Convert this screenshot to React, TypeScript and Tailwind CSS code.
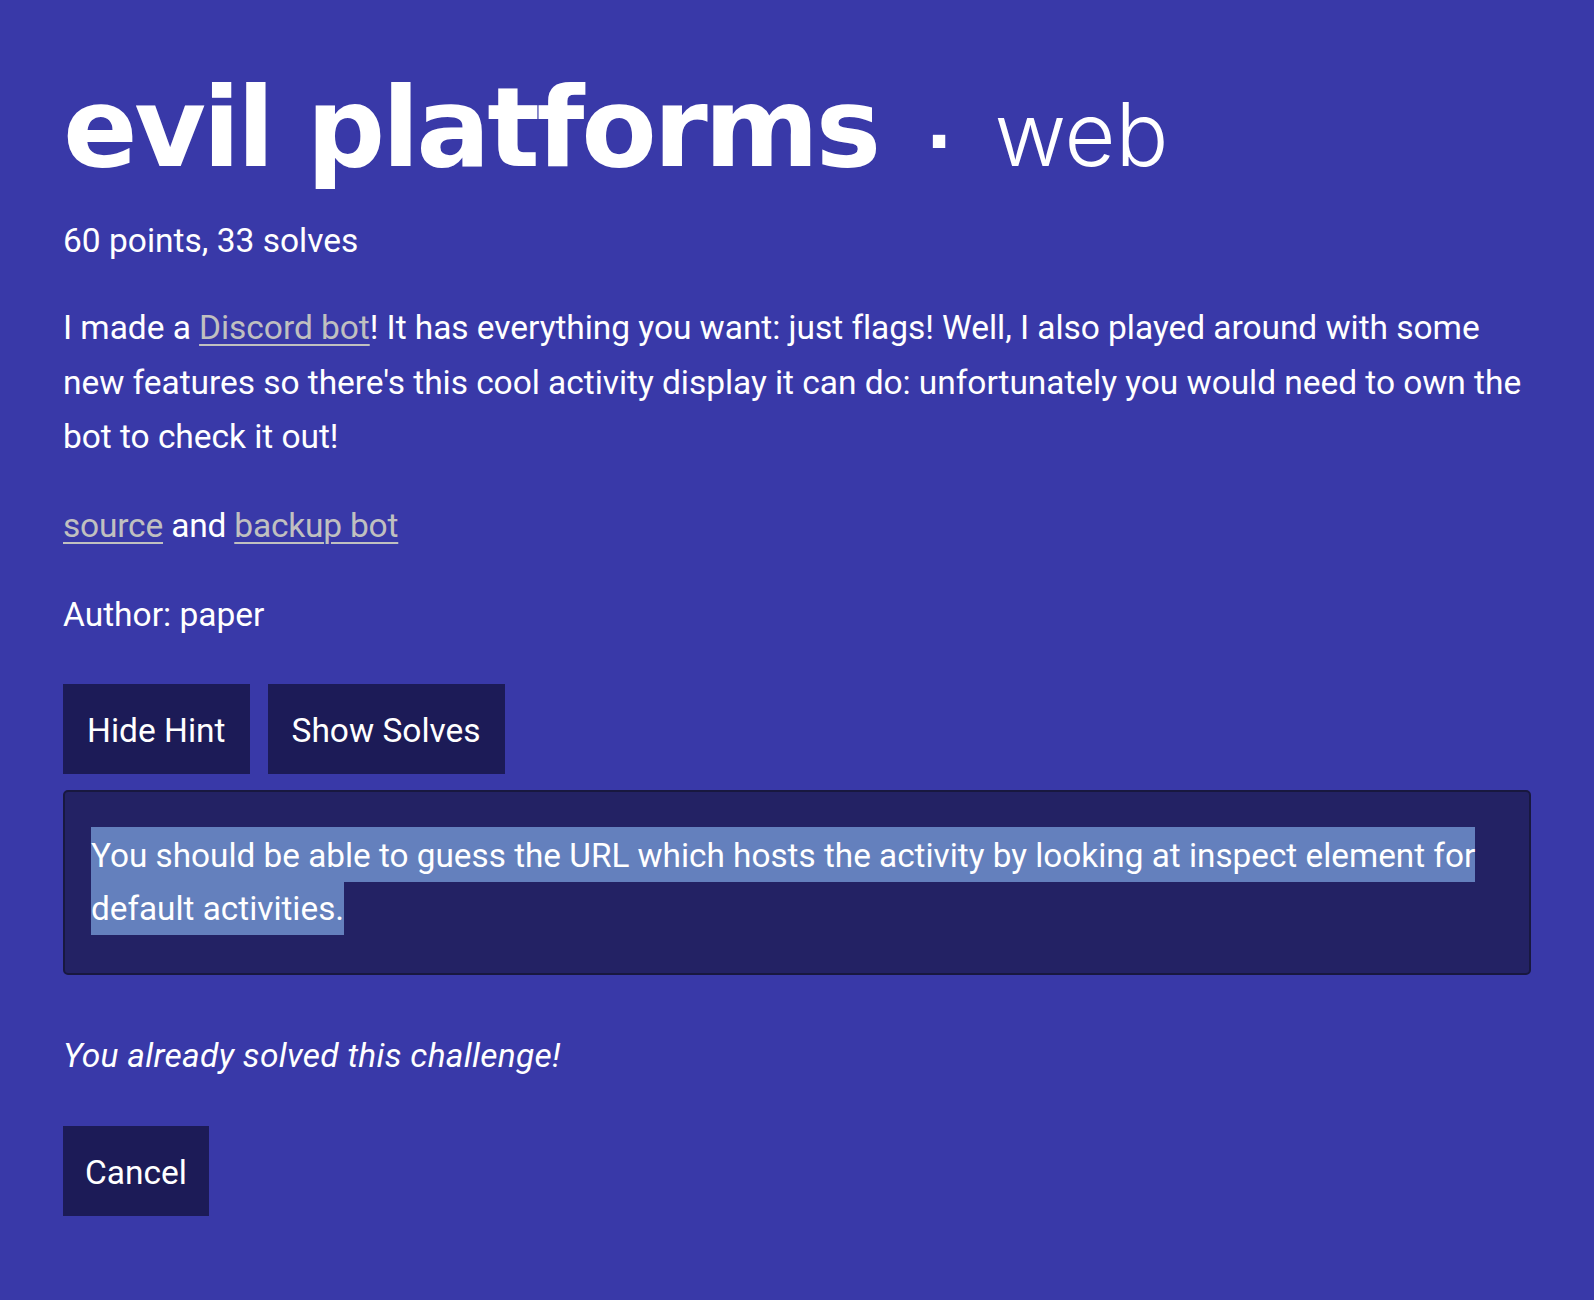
import React from "react";

export default function App() {
  return (
    <div className="min-h-[1300px] w-full bg-[#3939a8] text-white px-[63px] pt-[73px] pb-[80px] font-['Roboto',sans-serif]">
      <h1 className="flex items-baseline leading-none">
        <span className="text-[110px] font-bold tracking-[-3.3px] font-['DejaVu_Sans',sans-serif]">evil platforms</span>
        <span className="ml-[48px] text-[70px] font-bold font-['DejaVu_Sans',sans-serif]">·</span>
        <span className="ml-[42px] text-[88px] font-light font-['Inter',sans-serif]">web</span>
      </h1>
      <p className="mt-[31px] text-[33.5px] leading-[54px]">60 points, 33 solves</p>
      <p className="mt-[33px] text-[33.5px] leading-[54.5px] whitespace-nowrap tracking-[-0.05px]">
        I made a{" "}
        <a href="#" className="text-[#c0c0c0] underline underline-offset-[5px] decoration-2">Discord bot</a>
        ! It has everything you want: just flags! Well, I also played around with some
        <br />
        new features so there's this cool activity display it can do: unfortunately you would need to own the
        <br />
        bot to check it out!
      </p>
      <p className="mt-[34px] text-[33.5px] leading-[54px] tracking-[-0.2px]">
        <a href="#" className="text-[#c0c0c0] underline underline-offset-[5px] decoration-2">source</a> and{" "}
        <a href="#" className="text-[#c0c0c0] underline underline-offset-[5px] decoration-2">backup bot</a>
      </p>
      <p className="mt-[35px] text-[33.5px] leading-[54px]">Author: paper</p>
      <div className="mt-[42px] flex gap-[18px]">
        <button className="h-[90px] px-[24px] pt-[5px] bg-[#1c1b57] text-[33.5px] text-white">Hide Hint</button>
        <button className="h-[90px] px-[24px] pt-[5px] bg-[#1c1b57] text-[33.5px] text-white">Show Solves</button>
      </div>
      <div className="mt-[16px] rounded-[5px] border-2 border-[#18183f] bg-[#232264] px-[26px] pt-[37px] pb-[38px]">
        <p className="text-[33.3px] leading-[53px]">
          <span className="bg-[#6480bd] pt-[9px] pb-[7px] box-decoration-clone">
            You should be able to guess the URL which hosts the activity by looking at inspect element for default activities.
          </span>
        </p>
      </div>
      <p className="mt-[54px] text-[33.5px] leading-[54px] italic tracking-[0.3px]">You already solved this challenge!</p>
      <button className="mt-[43px] h-[90px] px-[22px] pt-[5px] bg-[#1c1b57] text-[33.5px] text-white">Cancel</button>
    </div>
  );
}
